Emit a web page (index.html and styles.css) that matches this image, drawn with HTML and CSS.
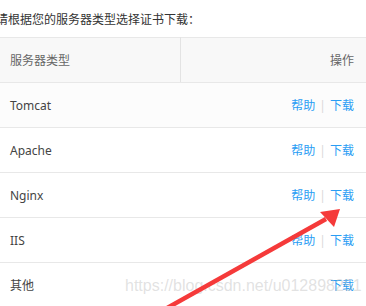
FILE: index.html
```html
<!DOCTYPE html>
<html lang="zh-CN">
<head>
  <meta charset="UTF-8">
  <title>证书下载</title>
  <link rel="stylesheet" href="styles.css">
</head>
<body>
  <div class="page">
    <p class="tip">请根据您的服务器类型选择证书下载：</p>

    <table class="list">
      <thead>
        <tr>
          <th class="name">服务器类型</th>
          <th class="ops">操作</th>
        </tr>
      </thead>
      <tbody>
        <tr class="hover">
          <td class="name">Tomcat</td>
          <td class="ops"><a>帮助</a><span class="sep">|</span><a>下载</a></td>
        </tr>
        <tr>
          <td class="name">Apache</td>
          <td class="ops"><a>帮助</a><span class="sep">|</span><a>下载</a></td>
        </tr>
        <tr>
          <td class="name">Nginx</td>
          <td class="ops"><a>帮助</a><span class="sep">|</span><a>下载</a></td>
        </tr>
        <tr>
          <td class="name">IIS</td>
          <td class="ops"><a>帮助</a><span class="sep">|</span><a>下载</a></td>
        </tr>
        <tr>
          <td class="name">其他</td>
          <td class="ops"><a>下载</a></td>
        </tr>
      </tbody>
    </table>

    <!-- csdn watermark and the red arrow drawn on the screenshot -->
    <div class="mark">https://blog.csdn.net/u012898251</div>
    <svg class="arrow" width="366" height="306" viewBox="0 0 366 306">
      <line x1="160" y1="312" x2="326" y2="219" stroke="#f53a3a" stroke-width="4.5"/>
      <polygon points="340,209 320,212 334,227" fill="#f53a3a"/>
    </svg>
  </div>
</body>
</html>
```

FILE: styles.css
```css
body {
  margin: 0;
  background: #fff;
  font-family: "Noto Sans", "Noto Sans CJK SC", sans-serif;
  font-size: 12px;
  color: #333;
}
.page {
  position: relative;
  width: 366px;
  height: 306px;
  overflow: hidden;
}
.tip {
  margin: 0 0 0 -4px;
  height: 37px;
  line-height: 39px;
  color: #333;
}
.list {
  width: 366px;
  border-collapse: collapse;
  border-top: 1px solid #e8e8e8;
}
.list th,
.list td {
  height: 44px;
  padding: 0 12px 0 10px;
  border-bottom: 1px solid #e8e8e8;
  font-weight: normal;
  text-align: left;
}
.list th {
  background: #f8f8f8;
  color: #666;
}
.list th.name {
  width: 158px;
  border-right: 1px solid #e3e3e3;
}
.list td {
  color: #444;
}
.list .ops {
  text-align: right;
}
.list tr.hover td {
  background: #fcfcfc;
}
.list a {
  color: #2a9df4;
}
.sep {
  color: #d9d9d9;
  margin: 0 4px;
}
.mark {
  position: absolute;
  left: 125px;
  top: 277px;
  font-family: "Liberation Sans", sans-serif;
  font-size: 16px;
  color: rgba(190, 190, 190, 0.45);
  white-space: nowrap;
}
.arrow {
  position: absolute;
  left: 0;
  top: 0;
}
```
